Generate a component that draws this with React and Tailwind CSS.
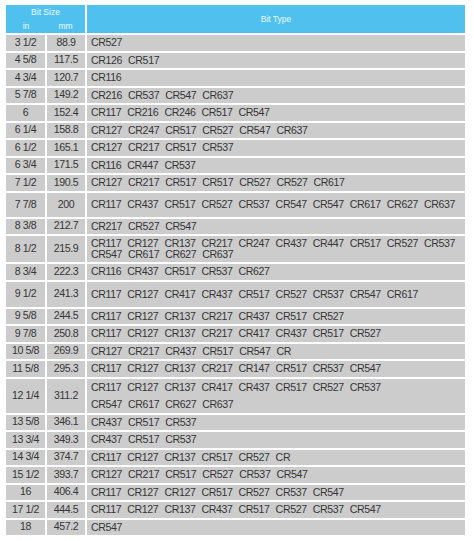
const ROWS = [
  ['3 1/2', '88.9', [['CR527']]],
  ['4 5/8', '117.5', [['CR126', 'CR517']]],
  ['4 3/4', '120.7', [['CR116']]],
  ['5 7/8', '149.2', [['CR216', 'CR537', 'CR547', 'CR637']]],
  ['6', '152.4', [['CR117', 'CR216', 'CR246', 'CR517', 'CR547']]],
  ['6 1/4', '158.8', [['CR127', 'CR247', 'CR517', 'CR527', 'CR547', 'CR637']]],
  ['6 1/2', '165.1', [['CR127', 'CR217', 'CR517', 'CR537']]],
  ['6 3/4', '171.5', [['CR116', 'CR447', 'CR537']]],
  ['7 1/2', '190.5', [['CR127', 'CR217', 'CR517', 'CR517', 'CR527', 'CR527', 'CR617']]],
  ['7 7/8', '200', [['CR117', 'CR437', 'CR517', 'CR527', 'CR537', 'CR547', 'CR547', 'CR617', 'CR627', 'CR637']], 'tall'],
  ['8 3/8', '212.7', [['CR217', 'CR527', 'CR547']]],
  ['8 1/2', '215.9', [
    ['CR117', 'CR127', 'CR137', 'CR217', 'CR247', 'CR437', 'CR447', 'CR517', 'CR527', 'CR537'],
    ['CR547', 'CR617', 'CR627', 'CR637'],
  ], 'tight'],
  ['8 3/4', '222.3', [['CR116', 'CR437', 'CR517', 'CR537', 'CR627']]],
  ['9 1/2', '241.3', [['CR117', 'CR127', 'CR417', 'CR437', 'CR517', 'CR527', 'CR537', 'CR547', 'CR617']], 'tall2'],
  ['9 5/8', '244.5', [['CR117', 'CR127', 'CR137', 'CR217', 'CR437', 'CR517', 'CR527']]],
  ['9 7/8', '250.8', [['CR117', 'CR127', 'CR137', 'CR217', 'CR417', 'CR437', 'CR517', 'CR527']]],
  ['10 5/8', '269.9', [['CR127', 'CR217', 'CR437', 'CR517', 'CR547', 'CR']]],
  ['11 5/8', '295.3', [['CR117', 'CR127', 'CR137', 'CR217', 'CR147', 'CR517', 'CR537', 'CR547']]],
  ['12 1/4', '311.2', [
    ['CR117', 'CR127', 'CR137', 'CR417', 'CR437', 'CR517', 'CR527', 'CR537'],
    ['CR547', 'CR617', 'CR627', 'CR637'],
  ], 'loose'],
  ['13 5/8', '346.1', [['CR437', 'CR517', 'CR537']]],
  ['13 3/4', '349.3', [['CR437', 'CR517', 'CR537']]],
  ['14 3/4', '374.7', [['CR117', 'CR127', 'CR137', 'CR517', 'CR527', 'CR']]],
  ['15 1/2', '393.7', [['CR127', 'CR217', 'CR517', 'CR527', 'CR537', 'CR547']]],
  ['16', '406.4', [['CR117', 'CR127', 'CR127', 'CR517', 'CR527', 'CR537', 'CR547']]],
  ['17 1/2', '444.5', [['CR117', 'CR127', 'CR137', 'CR437', 'CR517', 'CR527', 'CR537', 'CR547']]],
  ['18', '457.2', [['CR547']]],
];

const HEIGHT = {
  tall: 'h-[24px]',
  tight: 'h-[26px]',
  tall2: 'h-[25px]',
  loose: 'h-[34px]',
};

const cell = 'bg-[#cccccc] flex items-center';

function Row({ inch, mm, lines, kind }) {
  const h = HEIGHT[kind] || 'h-[15.5px]';
  return (
    <>
      <div className={`${cell} ${h} justify-center`}>{inch}</div>
      <div className={`${cell} ${h} justify-center`}>{mm}</div>
      <div className={`${cell} ${h} pl-[4px]`}>
        <div className={`flex flex-col ${kind === 'loose' ? 'gap-[6px]' : ''}`}>
          {lines.map((words, i) => (
            <div key={i} className="flex gap-x-[6px] leading-[11px]">
              {words.map((w, j) => (
                <span key={j}>{w}</span>
              ))}
            </div>
          ))}
        </div>
      </div>
    </>
  );
}

export default function App() {
  return (
    <div
      className="w-[474px] h-[541px] bg-white pl-[6px] pt-[5px] text-[#363636] text-[10.6px] tracking-[-0.38px]"
      style={{ fontFamily: '"Liberation Sans", Arial, sans-serif' }}
    >
      <div className="w-[459px] grid grid-cols-[39px_38px_1fr] gap-x-[2px] gap-y-[2px]">
        {/* header */}
        <div className="col-span-2 h-[28px] bg-[#50c0ef] flex flex-col text-[8.5px] tracking-normal text-white/90">
          <div className="h-[14px] flex items-end justify-center">Bit Size</div>
          <div className="flex-1 flex items-center">
            <span className="w-[40px] text-center">in</span>
            <span className="w-[39px] text-center">mm</span>
          </div>
        </div>
        <div className="h-[28px] bg-[#50c0ef] flex items-center justify-center text-[8.5px] tracking-normal text-white/90">
          Bit Type
        </div>

        {ROWS.map(([inch, mm, lines, kind]) => (
          <Row key={inch} inch={inch} mm={mm} lines={lines} kind={kind} />
        ))}
      </div>
    </div>
  );
}
